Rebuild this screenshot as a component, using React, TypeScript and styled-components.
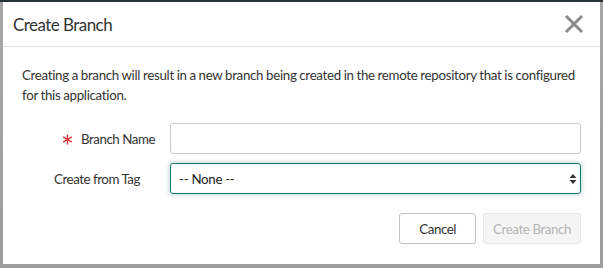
import React from "react";
import styled, { createGlobalStyle } from "styled-components";

const Global = createGlobalStyle`
  html, body { margin: 0; padding: 0; }
  body {
    background: #9a9a9a;
    font-family: "Lato", "Open Sans", sans-serif;
    width: 603px;
    height: 268px;
    overflow: hidden;
  }
`;

const Backdrop = styled.div`
  width: 603px;
  height: 268px;
  box-sizing: border-box;
  border-top: 2px solid #263236;
  padding: 0 3px 0 3px;
  background: linear-gradient(#a7a7a7, #9c9c9c);
`;

const Modal = styled.div`
  background: #fff;
  height: 262px;
  box-sizing: border-box;
  display: flex;
  flex-direction: column;
`;

const Header = styled.div`
  height: 44px;
  display: flex;
  align-items: center;
  justify-content: space-between;
  padding: 0 14px 0 10px;
  border-bottom: 1px solid #e2e2e2;
`;

const Title = styled.h1`
  margin: 0;
  font-size: 17px;
  font-weight: 400;
  color: #333;
  letter-spacing: -0.55px;
`;

const Close = styled.button`
  border: 0;
  background: none;
  padding: 0;
  width: 24px;
  height: 24px;
  display: flex;
  align-items: center;
  justify-content: center;
  cursor: pointer;
`;

const Body = styled.div`
  padding: 18px 19px 0 19px;
  display: flex;
  flex-direction: column;
`;

const Intro = styled.p`
  margin: 0 0 18px 0;
  font-size: 13.3px;
  line-height: 20px;
  color: #333;
  letter-spacing: -0.3px;
  word-spacing: -0.3px;
`;

const Row = styled.div`
  display: grid;
  grid-template-columns: 148px 1fr;
  align-items: center;
  margin-bottom: 9px;
`;

const Label = styled.label<{ $pad: number }>`
  font-size: 13.3px;
  color: #333;
  text-align: right;
  padding-right: ${(p) => p.$pad}px;
  display: flex;
  justify-content: flex-end;
  align-items: center;
  gap: 8px;
  letter-spacing: -0.45px;
`;

const Required = styled.svg`
  width: 11px;
  height: 11px;
  margin-top: 1px;
`;

const TextInput = styled.input`
  height: 31px;
  box-sizing: border-box;
  border: 1px solid #cbcbcb;
  border-radius: 3px;
  font-size: 13.3px;
  padding: 0 8px;
  font-family: inherit;
  outline: none;
`;

const SelectBox = styled.div`
  height: 31px;
  box-sizing: border-box;
  border: 1px solid #1d7a6e;
  border-radius: 3px;
  box-shadow: 0 0 4px 1px rgba(60, 150, 135, 0.35);
  display: flex;
  align-items: center;
  justify-content: space-between;
  padding: 0 3px 0 8px;
  font-size: 13.3px;
  color: #222;
  letter-spacing: -0.3px;
`;

const Footer = styled.div`
  display: flex;
  justify-content: flex-end;
  gap: 7px;
  margin-top: 10px;
`;

const Button = styled.button<{ $disabled?: boolean }>`
  height: 31px;
  box-sizing: border-box;
  border-radius: 3px;
  font-family: inherit;
  font-size: 13.3px;
  padding: 0 ${(p) => (p.$disabled ? 9 : 19)}px;
  border: 1px solid ${(p) => (p.$disabled ? "#e8e8e8" : "#c4c4c4")};
  background: ${(p) => (p.$disabled ? "#f5f5f5" : "#fff")};
  color: ${(p) => (p.$disabled ? "#b5b5b5" : "#333")};
  letter-spacing: -0.4px;
`;

export default function App() {
  return (
    <>
      <Global />
      <Backdrop>
        <Modal>
          <Header>
            <Title>Create Branch</Title>
            <Close aria-label="Close">
              <svg width="20" height="20" viewBox="0 0 20 20">
                <path d="M2 2 L18 18 M18 2 L2 18" stroke="#8a8a8a" strokeWidth="3" strokeLinecap="butt" />
              </svg>
            </Close>
          </Header>
          <Body>
            <Intro>
              Creating a branch will result in a new branch being created in the remote repository that is configured
              for this application.
            </Intro>
            <Row>
              <Label $pad={15}>
                <Required viewBox="0 0 12 12" aria-hidden="true">
                  <path d="M6 0.5 V11.5 M1.2 3.2 L10.8 8.8 M10.8 3.2 L1.2 8.8" stroke="#e0393e" strokeWidth="1.6" />
                </Required>
                Branch Name
              </Label>
              <TextInput />
            </Row>
            <Row>
              <Label $pad={30}>Create from Tag</Label>
              <SelectBox>
                <span>-- None --</span>
                <svg width="8" height="12" viewBox="0 0 8 12">
                  <path d="M4 1 L7.5 5 L0.5 5 Z M4 11 L7.5 7 L0.5 7 Z" fill="#333" />
                </svg>
              </SelectBox>
            </Row>
            <Footer>
              <Button>Cancel</Button>
              <Button $disabled>Create Branch</Button>
            </Footer>
          </Body>
        </Modal>
      </Backdrop>
    </>
  );
}
